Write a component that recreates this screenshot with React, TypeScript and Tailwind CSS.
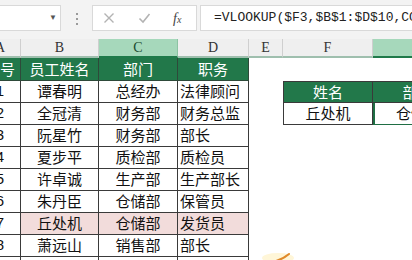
import React from 'react'

const cjk = "font-['Noto_Sans_CJK_SC','Noto_Sans',sans-serif]"

const rows = [
  ['1', '谭春明', '总经办', '法律顾问'],
  ['2', '全冠清', '财务部', '财务总监'],
  ['3', '阮星竹', '财务部', '部长'],
  ['4', '夏步平', '质检部', '质检员'],
  ['5', '许卓诚', '生产部', '生产部长'],
  ['6', '朱丹臣', '仓储部', '保管员'],
  ['7', '丘处机', '仓储部', '发货员'],
  ['8', '萧远山', '销售部', '部长'],
  ['', '', '', ''],
]

const letters = ['A', 'B', 'C', 'D', 'E', 'F', 'G']

function FormulaBar() {
  return (
    <div className="flex h-[39px] items-start bg-[#f3f3f3] pt-[5px]">
      <div className="relative h-[26px] w-[61px] border border-l-0 border-[#d9d9d9] bg-white">
        <span className="absolute left-[49px] top-[5px] text-[8px] text-[#555]">▼</span>
      </div>
      <div className="flex w-[31px] flex-col items-center gap-[3px] pt-[8px]">
        <span className="h-[2px] w-[2px] bg-[#9a9a9a]" />
        <span className="h-[2px] w-[2px] bg-[#9a9a9a]" />
        <span className="h-[2px] w-[2px] bg-[#9a9a9a]" />
      </div>
      <div className="flex h-[26px] w-[105px] items-center border border-[#d9d9d9] bg-white">
        <svg width="12" height="12" viewBox="0 0 12 12" className="ml-[10px]">
          <path d="M1.5 1.5 L10.5 10.5 M10.5 1.5 L1.5 10.5" stroke="#b3b3b3" strokeWidth="1.4" />
        </svg>
        <svg width="13" height="12" viewBox="0 0 13 12" className="ml-[23px]">
          <path d="M1.5 6.5 L5 10 L11.5 2" stroke="#b3b3b3" strokeWidth="1.6" fill="none" />
        </svg>
        <span className="ml-[22px] font-['Liberation_Serif',serif] text-[14px] italic text-[#444]">
          f<span className="text-[10px]">x</span>
        </span>
      </div>
      <div className="ml-[3px] flex h-[26px] flex-1 items-center overflow-hidden whitespace-nowrap border border-r-0 border-[#d9d9d9] bg-white pl-[13px] font-['Liberation_Mono',monospace] text-[13px] text-[#222]">
        =VLOOKUP($F3,$B$1:$D$10,COLUMN(B1),0)
      </div>
    </div>
  )
}

export default function App() {
  const cell = 'flex h-[22px] items-center border-b border-r border-[#3a3a3a] text-[15px] text-[#111]'
  return (
    <div className="relative h-[260px] w-[412px] overflow-hidden bg-white">
      <FormulaBar />
      <div className="ml-[-20px] grid w-max grid-cols-[41px_78px_79px_71px_34px_90px_90px]">
        {letters.map((l) => (
          <div
            key={l}
            className={
              'flex h-[19px] items-center justify-center border-r border-b-2 font-[\'Liberation_Serif\',serif] text-[14px] ' +
              (l === 'C' || l === 'G'
                ? 'border-r-[#8cc3a3] border-b-[#1f7a4a] bg-[#a6d8bb] text-[#1a4a30]'
                : 'border-r-[#cfcfcf] border-b-[#9fbfae] bg-[#efefef] text-[#333]')
            }
          >
            {l}
          </div>
        ))}

        {['序号', '员工姓名', '部门', '职务'].map((t) => (
          <div
            key={t}
            className={`flex h-[23px] items-center justify-center border-b border-r border-[#2e4a3a] bg-[#22784a] text-[15px] text-white ${cjk}`}
          >
            {t}
          </div>
        ))}
        <div />
        <div />
        <div />

        {rows.map((r, i) => {
          const pink = r[1] === '丘处机'
          const bg = pink ? 'bg-[#f2dcdb]' : 'bg-white'
          return (
            <React.Fragment key={i}>
              <div className={`${cell} justify-center font-['Liberation_Sans',sans-serif]`}>{r[0]}</div>
              <div className={`${cell} ${bg} justify-center ${cjk}`}>{r[1]}</div>
              <div className={`${cell} ${bg} justify-center ${cjk}`}>{r[2]}</div>
              <div className={`${cell} ${bg} pl-[2px] ${cjk}`}>{r[3]}</div>
              <div />
              {i === 0 && (
                <>
                  <div className={`${cell} justify-center border-l border-t border-[#2e4a3a] bg-[#22784a] text-white ${cjk}`}>姓名</div>
                  <div className={`${cell} justify-center border-t border-[#2e4a3a] bg-[#22784a] text-white ${cjk}`}>部门</div>
                </>
              )}
              {i === 1 && (
                <>
                  <div className={`${cell} justify-center border-l ${cjk}`}>丘处机</div>
                  <div className={`${cell} justify-center border-b-[#1f6e44] border-l-2 border-l-[#1f6e44] ${cjk}`}>仓储部</div>
                </>
              )}
              {i > 1 && (
                <>
                  <div />
                  <div />
                </>
              )}
            </React.Fragment>
          )
        })}
      </div>
      <svg width="40" height="16" viewBox="0 0 40 16" className="absolute left-[256px] top-[246px]">
        <ellipse cx="22" cy="12" rx="16" ry="5" fill="#fff6d8" />
        <path d="M20 15 Q27 13 33 8" stroke="#e08a2a" strokeWidth="2" fill="none" strokeLinecap="round" />
      </svg>
    </div>
  )
}
